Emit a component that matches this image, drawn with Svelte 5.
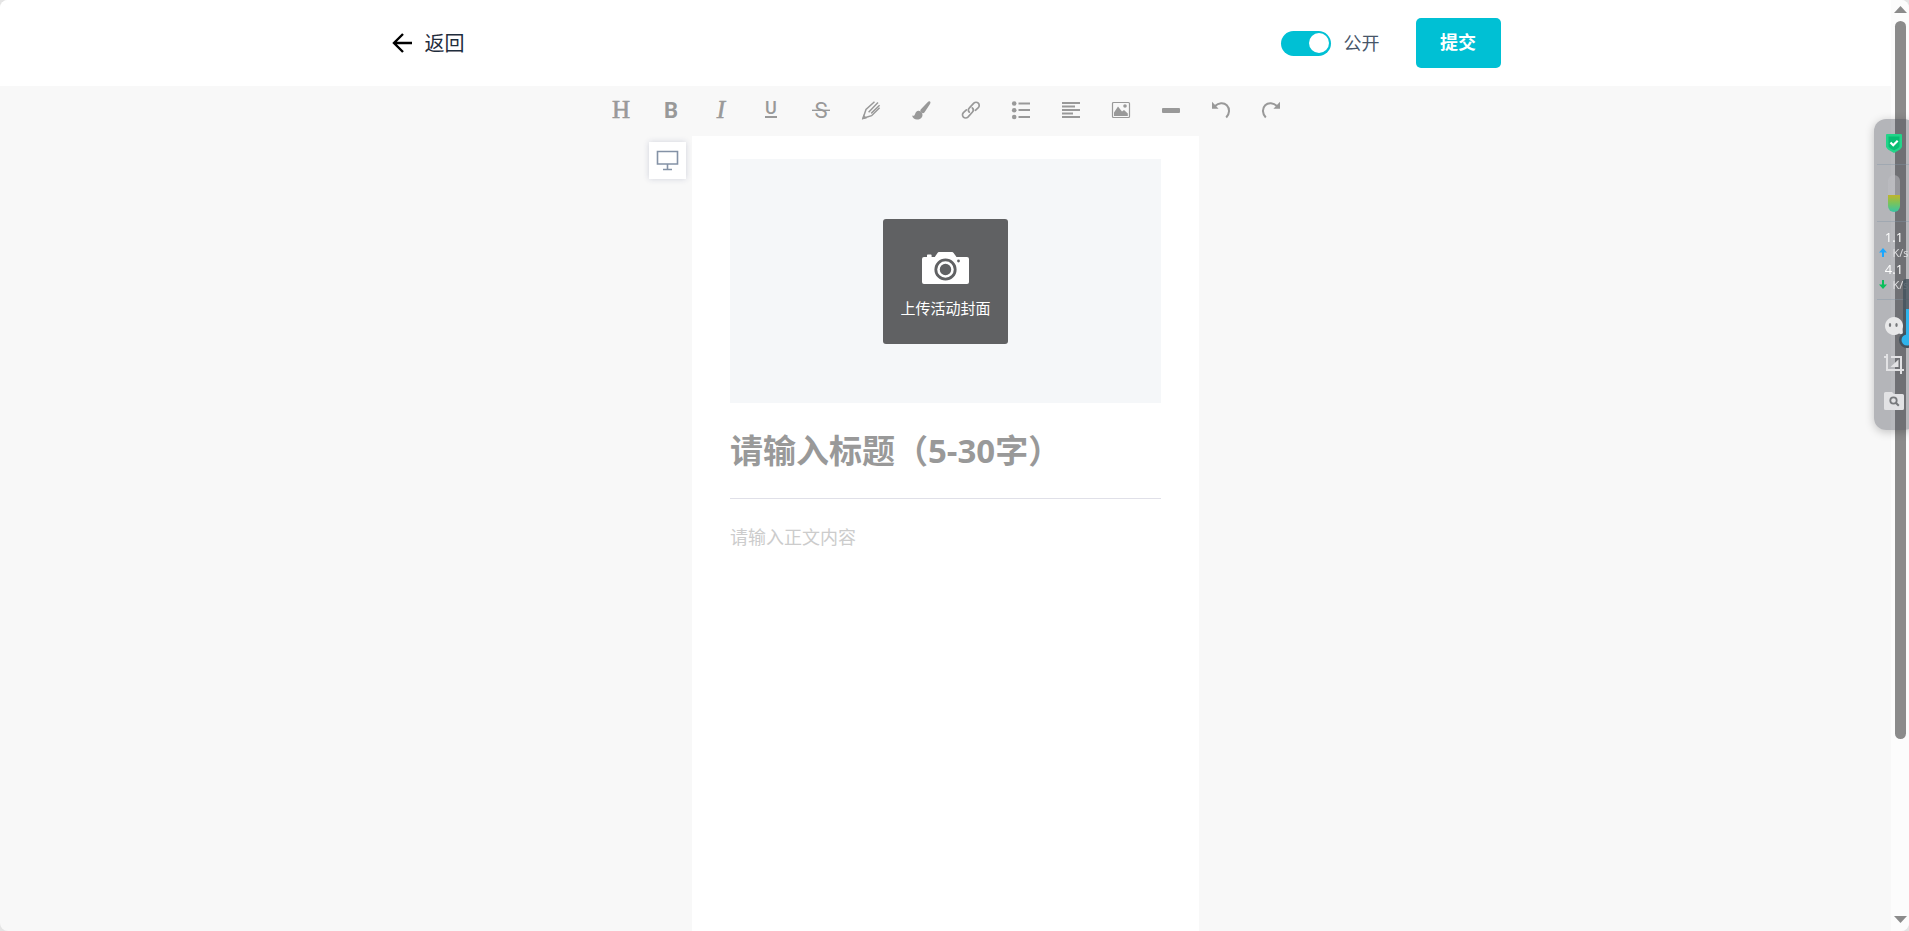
<script lang="ts">
	let open = $state(true);
	let title = $state('');
	let content = $state('');

	const tools = [
		{ id: 'heading', label: '标题' },
		{ id: 'bold', label: '加粗' },
		{ id: 'italic', label: '斜体' },
		{ id: 'underline', label: '下划线' },
		{ id: 'strike', label: '删除线' },
		{ id: 'color', label: '文字颜色' },
		{ id: 'brush', label: '背景颜色' },
		{ id: 'link', label: '链接' },
		{ id: 'list', label: '列表' },
		{ id: 'align', label: '对齐' },
		{ id: 'image', label: '图片' },
		{ id: 'line', label: '分割线' },
		{ id: 'undo', label: '撤销' },
		{ id: 'redo', label: '重做' }
	];
</script>

<div class="window">
	<div class="main">
		<header>
			<div class="header-inner">
				<a class="back" href="#back">
					<svg width="20" height="20" viewBox="0 0 20 20" fill="none" stroke="#000" stroke-width="2.4">
						<path d="M20 10H2M11 1L2 10l9 9" />
					</svg>
					<span>返回</span>
				</a>
				<div class="actions">
					<label class="switch">
						<input type="checkbox" bind:checked={open} />
						<span class="track"></span>
						<span>公开</span>
					</label>
					<button class="submit">提交</button>
				</div>
			</div>
		</header>

		<div class="toolbar">
			{#each tools as tool}
				<button class="tool" aria-label={tool.label}>
					<svg width="20" height="20" viewBox="0 0 20 20">
						{#if tool.id === 'heading'}
							<text class="serif" x="10" y="17" font-size="25">H</text>
						{:else if tool.id === 'bold'}
							<text class="sans bold" x="10" y="17" font-size="22">B</text>
						{:else if tool.id === 'italic'}
							<text class="serif italic" x="10" y="17" font-size="25">I</text>
						{:else if tool.id === 'underline'}
							<text class="sans medium" x="10" y="13" font-size="18">U</text>
							<rect x="4" y="15" width="12" height="2" />
						{:else if tool.id === 'strike'}
							<text class="sans" x="10" y="17" font-size="22">S</text>
							<rect x="1" y="8.6" width="18" height="1.4" />
						{:else if tool.id === 'color'}
							<g fill="none" stroke="currentColor" stroke-width="1.5">
								<path d="M13.5.8L5 8.4 2 17.3l8.6-2.6 8-8" />
								<path d="M7.6 11.2L17 1.6M10.2 12.4l8.4-8.2" />
							</g>
							<path d="M1 18.6l1.4-5 3.6 3.6z" />
						{:else if tool.id === 'brush'}
							<path d="M18.6.2c1.2.4 1 1.6.4 2.8L13.6 11.2c-.8 1.2-2.2 1.2-3.3.2s-1.400-2-.4-3.200l6.700-7c.7-.7 1.300-1.200 2-1z" />
							<path d="M7.800 9.800c2 .2 3.600 1.800 3.700 3.900.1 3-2.600 5-5.500 4.800-2.400-.1-4.200-1.500-5-4 1.600.8 2.500.1 3.100-1.600.6-1.900 1.800-3.300 3.700-3.100z" />
						{:else if tool.id === 'link'}
							<g fill="none" stroke="currentColor" stroke-width="1.7" stroke-linecap="round">
								<path d="M8.3 11.2c-1.2-1.2-1.3-2.9-.1-4.1l4.600-4.900c1.200-1.200 3.300-1.200 4.500 0s1.200 3.300 0 4.500l-2.900 2.600" />
								<path d="M11.300 6.900c1.200 1.200 1.400 2.900.2 4.100l-4.600 5.100c-1.200 1.200-3.300 1.200-4.500 0s-1.200-3.300 0-4.500l3-2.800" />
							</g>
						{:else if tool.id === 'list'}
							<circle cx="3.2" cy="2.5" r="2.3" />
							<circle cx="3.2" cy="9.2" r="2.3" />
							<circle cx="3.2" cy="16" r="2.3" />
							<path d="M7.500 1.500h11.500v2H7.500zM7.500 8h11.500v2H7.500zM7.500 15h11.500v2H7.500z" />
						{:else if tool.id === 'align'}
							<path d="M1 1h18v2H1zM1 4.500h13v2H1zM1 8h18v2H1zM1 11.500h11v2H1zM1 15h18v2H1z" />
						{:else if tool.id === 'image'}
							<rect x="1.5" y="1.5" width="17" height="15" rx="1" fill="none" stroke="currentColor" stroke-width="1.2" />
							<path d="M3 15v-3.500L7 5.600l4 5 2-1.600 3.800 3.600V15z" />
							<circle cx="14" cy="5" r="1.8" />
						{:else if tool.id === 'line'}
							<rect x="1" y="7" width="18" height="5" rx="1" />
						{:else if tool.id === 'undo'}
							<path d="M1 .8v7h6.600z" />
							<path d="M4 5C7.500 1.800 12.500 1 15.800 4.200c3.200 3.300 3 8.500-.6 12.300" fill="none" stroke="currentColor" stroke-width="2" />
						{:else}
							<path d="M19 .8v7h-6.600z" />
							<path d="M16 5C12.500 1.800 7.500 1 4.200 4.200 1 7.500 1.200 12.700 4.800 16.500" fill="none" stroke="currentColor" stroke-width="2" />
						{/if}
					</svg>
				</button>
			{/each}
		</div>

		<div class="editor">
			<button class="preview" aria-label="预览">
				<svg width="23" height="21" viewBox="0 0 23 21" fill="none" stroke="#8492a6" stroke-width="1.6">
					<path d="M1.500 1.500h20v12.500h-20zM11.500 14v5M7 19.500h9" />
				</svg>
			</button>
			<main class="page">
				<div class="cover">
					<button class="upload">
						<svg width="47" height="32" viewBox="0 0 47 32">
							<path d="M2 5h3V3.200Q5 2.500 5.800 2.500h3q.8 0 .8.700V5h3.200L15.500.9Q16 0 17 0h13q1 0 1.600.9L34.500 5H45q2 0 2 2v23q0 2-2 2H2q-2 0-2-2V7q0-2 2-2z" fill="#fff" />
							<circle cx="23.5" cy="17.5" r="9.7" fill="none" stroke="#606163" stroke-width="2.800" />
							<circle cx="23.5" cy="17.5" r="5.7" fill="#606163" />
							<circle cx="36.5" cy="9" r="1.4" fill="#606163" />
						</svg>
						<span>上传活动封面</span>
					</button>
				</div>
				<input class="title" type="text" aria-label="标题" placeholder="请输入标题（5-30字）" bind:value={title} />
				<textarea class="content" aria-label="正文" placeholder="请输入正文内容" bind:value={content}></textarea>
			</main>
		</div>
	</div>

	<div class="scrollbar">
		<svg width="13" height="7" viewBox="0 0 13 7"><path d="M6.500 0L13 7H0z" /></svg>
		<div class="rail"><div class="thumb"></div></div>
		<svg width="13" height="7" viewBox="0 0 13 7"><path d="M0 0h13L6.500 7z" /></svg>
	</div>
</div>

<aside class="widget">
	<div class="cell shield">
		<svg width="16" height="19" viewBox="0 0 16 19">
			<path d="M1 0h14q1 0 1 1v11.500Q16 15 8 19 0 15 0 12.500V1q0-1 1-1z" fill="#22d589" />
			<path d="M2.500 2.500h11v10Q13 14 8 16.300 3 14 2.500 12.500z" fill="#08bd72" />
			<path d="M4.500 8.500l2.700 2.700 4.500-4.500" fill="none" stroke="#fff" stroke-width="2.2" />
		</svg>
	</div>
	<div class="cell memory"><div class="capsule"></div></div>
	<div class="cell speed">
		<span class="num">1.1</span>
		<span class="unit">
			<svg width="8" height="9" viewBox="0 0 8 9" fill="#1aa7ff"><path d="M4 0l4 4.500H5V9H3V4.500H0z" /></svg>
			K/s
		</span>
		<span class="num">4.1</span>
		<span class="unit">
			<svg width="8" height="9" viewBox="0 0 8 9" fill="#0abf5b"><path d="M4 9l4-4.500H5V0H3v4.500H0z" /></svg>
			K/s
		</span>
	</div>
	<div class="cell apps">
		<svg width="20" height="20" viewBox="0 0 20 20">
			<path d="M10 1a9 9 0 0 1 8.500 12l.5 6-4-1.500A9 9 0 1 1 10 1z" fill="#e8e8e9" />
			<ellipse cx="6" cy="9" rx="1.2" ry="2" fill="#77797c" />
			<ellipse cx="12.5" cy="9" rx="1.2" ry="2" fill="#77797c" />
		</svg>
		<svg width="20" height="20" viewBox="0 0 20 20">
			<path d="M0 3h4M3 0v16h17M7 3h10v17" fill="none" stroke="#e2e2e4" stroke-width="2" />
			<path d="M14.500 5.500V13H6.500z" fill="#e2e2e4" />
		</svg>
		<svg width="20" height="18" viewBox="0 0 20 18">
			<path d="M1.500 0H8l2 2h8.500Q20 2 20 3.500v13q0 1.500-1.500 1.500h-17Q0 18 0 16.500v-15Q0 0 1.500 0z" fill="#e2e2e4" />
			<circle cx="9.5" cy="8.5" r="3.2" fill="none" stroke="#77797c" stroke-width="1.8" />
			<path d="M11.800 10.800l3 3" stroke="#77797c" stroke-width="2" />
		</svg>
	</div>
</aside>

<div class="gauge">
	<svg width="10" height="70" viewBox="0 0 10 70">
		<rect x="4" width="10" height="66" rx="3" fill="#44525d" fill-opacity="0.8" />
		<circle cx="8" cy="61" r="8" fill="#44525d" />
		<path d="M7 30h3v28H7z" fill="#2fb4ec" />
		<circle cx="8" cy="61" r="5.5" fill="#2fb4ec" />
	</svg>
</div>

<style>
	:global(body) {
		background: #e4e4e4;
		overflow: hidden;
		font-family: 'Open Sans', 'Noto Sans CJK SC', sans-serif;
	}

	button {
		border: 0;
		padding: 0;
		font-family: inherit;
		cursor: pointer;
	}

	.window {
		display: flex;
		height: 100vh;
		border-radius: 8px;
		overflow: hidden;
		background: #f8f8f8;
	}

	.main {
		flex: 1;
		min-width: 0;
		display: flex;
		flex-direction: column;
	}

	header {
		background: #fff;
	}

	.header-inner {
		max-width: 1110px;
		height: 86px;
		margin: 0 auto;
		display: flex;
		align-items: center;
		justify-content: space-between;
	}

	.back {
		display: flex;
		align-items: center;
		gap: 13px;
		padding-left: 1px;
		color: #1f2d3d;
		font-size: 20px;
		line-height: 24px;
		text-decoration: none;
	}

	.back span {
		padding-top: 2px;
	}

	.actions {
		display: flex;
		align-items: center;
		gap: 36px;
	}

	.switch {
		display: flex;
		align-items: center;
		gap: 13px;
		color: #475669;
		font-size: 18px;
		line-height: 24px;
		cursor: pointer;
	}

	.switch input {
		position: absolute;
		opacity: 0;
	}

	.track {
		box-sizing: border-box;
		width: 50px;
		height: 25px;
		padding: 2px;
		border-radius: 13px;
		background: #bfcbd9;
		display: flex;
		align-items: center;
	}

	.track::after {
		content: '';
		width: 20px;
		height: 20px;
		border-radius: 50%;
		background: #fff;
	}

	.switch input:checked + .track {
		background: #00c0d4;
		justify-content: flex-end;
	}

	.submit {
		width: 85px;
		height: 50px;
		padding-bottom: 5px;
		border-radius: 5px;
		background: #00c0d4;
		color: #fff;
		font-size: 18px;
		font-weight: 700;
	}

	.toolbar {
		display: flex;
		justify-content: center;
		padding-left: 1px;
	}

	.tool {
		width: 50px;
		height: 50px;
		display: flex;
		align-items: center;
		justify-content: center;
		background: none;
		color: #999;
	}

	.tool svg {
		fill: currentColor;
		overflow: visible;
	}

	.tool text {
		text-anchor: middle;
	}

	.serif {
		font-family: 'Liberation Serif', serif;
		stroke: currentColor;
		stroke-width: 0.6;
	}

	.sans {
		font-family: Roboto, sans-serif;
	}

	.medium {
		font-weight: 500;
	}

	.bold {
		font-weight: 700;
	}

	.italic {
		font-style: italic;
	}

	.editor {
		flex: 1;
		display: grid;
		grid-template-columns: 1fr minmax(0, 507px) 1fr;
	}

	.preview {
		justify-self: end;
		width: 37px;
		height: 37px;
		margin: 6px 6px 0 0;
		display: flex;
		align-items: center;
		justify-content: center;
		background: #fff;
		box-shadow: 0 0 6px rgba(31, 45, 101, 0.18);
	}

	.page {
		display: flex;
		flex-direction: column;
		padding: 23px 38px 0;
		background: #fff;
	}

	.cover {
		height: 244px;
		display: flex;
		align-items: center;
		justify-content: center;
		background: #f5f7f9;
	}

	.upload {
		box-sizing: border-box;
		width: 125px;
		height: 125px;
		padding-top: 9px;
		display: flex;
		flex-direction: column;
		align-items: center;
		justify-content: center;
		gap: 12px;
		border-radius: 3px;
		background: #606163;
		color: #fff;
		font-size: 15px;
		line-height: 24px;
	}

	.title,
	.content {
		border: 0;
		padding: 0;
		outline: none;
		background: none;
		font-family: inherit;
	}

	.title {
		height: 95px;
		border-bottom: 1px solid #e0e0e8;
		font-size: 33px;
		font-weight: 700;
	}

	.content {
		flex: 1;
		padding-top: 24px;
		resize: none;
		font-size: 18px;
		line-height: 28px;
	}

	.title::placeholder {
		color: #999;
	}

	.content::placeholder {
		color: #ccc;
	}

	.scrollbar {
		box-sizing: border-box;
		width: 18px;
		padding: 6px 2px 8px 3px;
		display: flex;
		flex-direction: column;
		align-items: center;
		gap: 8px;
		background: #fcfcfc;
	}

	.scrollbar svg {
		flex: none;
		fill: #8b8b8b;
	}

	.rail {
		flex: 1;
		width: 11px;
	}

	.thumb {
		height: 81%;
		border-radius: 6px;
		background: #8b8b8b;
	}

	.widget {
		position: fixed;
		top: 119px;
		right: -7px;
		width: 42px;
		border-radius: 12px;
		background: rgba(61, 64, 75, 0.36);
		box-shadow: 0 2px 10px rgba(0, 0, 0, 0.22);
		color: #fff;
		font-size: 11px;
	}

	.cell {
		box-sizing: border-box;
		display: flex;
		flex-direction: column;
		align-items: center;
		justify-content: center;
		margin: 0 5px 0 3px;
		border-bottom: 1px solid rgba(130, 150, 165, 0.4);
	}

	.shield {
		height: 46px;
		padding-top: 4px;
	}

	.memory {
		height: 57px;
	}

	.capsule {
		width: 12px;
		height: 37px;
		border-radius: 6px;
		background: linear-gradient(rgba(190, 190, 195, 0.5) 54%, #c0b42c 54%, #7cc35a 75%, #38c5a4);
	}

	.speed {
		height: 78px;
		line-height: 16px;
	}

	.num {
		font-size: 13px;
	}

	.unit {
		display: flex;
		align-items: center;
		gap: 5px;
		color: #e0e0e2;
	}

	.apps {
		height: 130px;
		padding-bottom: 4px;
		gap: 18px;
		border-bottom: 0;
	}

	.gauge {
		position: fixed;
		top: 279px;
		right: 0;
		height: 70px;
	}
</style>
